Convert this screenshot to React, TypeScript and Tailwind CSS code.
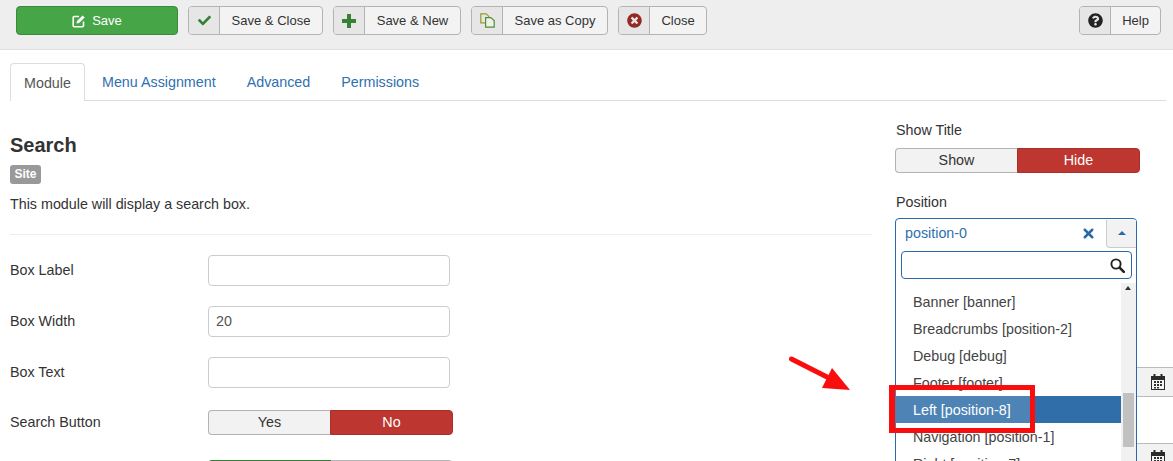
import { X } from 'lucide-react';
import { FaCheck, FaQuestionCircle, FaTimesCircle } from 'react-icons/fa';
import type { ReactNode } from 'react';

function ToolButton({ icon, label, width }: { icon: ReactNode; label: string; width: string }) {
  return (
    <div className={`flex h-[29px] ${width} rounded-[4px] border border-[#b3b3b3] bg-[#f3f3f3] text-[13px] text-[#333]`}>
      <div className="flex w-[31px] shrink-0 items-center justify-center rounded-l-[3px] border-r border-[#b3b3b3] bg-[#e6e6e6]">
        {icon}
      </div>
      <div className="flex flex-1 items-center justify-center">{label}</div>
    </div>
  );
}

function Toggle({ left, right, rightClass }: { left: string; right: string; rightClass: string }) {
  return (
    <div className="flex h-[25px] w-[245px] text-[14.3px]">
      <div className="flex w-[122px] items-center justify-center rounded-l-[4px] border border-r-0 border-[#b3b3b3] bg-[#f2f2f2] text-[#333]">
        {left}
      </div>
      <div className={`flex flex-1 items-center justify-center rounded-r-[4px] border ${rightClass}`}>{right}</div>
    </div>
  );
}

function Field({ label, value }: { label: string; value?: string }) {
  return (
    <div className="flex h-[31px] items-center">
      <div className="w-[198px] text-[14.3px] text-[#333]">{label}</div>
      <div className="flex h-[31px] w-[242px] items-center rounded-[4px] border border-[#ccc] bg-white px-[7px] text-[14.3px] text-[#555]">
        {value}
      </div>
    </div>
  );
}

function EditIcon() {
  return (
    <svg width="14" height="14" viewBox="0 0 14 14" fill="none">
      <path d="M7 2.5H2.2a1 1 0 0 0-1 1v8.3a1 1 0 0 0 1 1h8.3a1 1 0 0 0 1-1V7.5" stroke="#fff" strokeWidth="1.6" />
      <path d="M4.5 9.6l.5-2.6L10.6 1.4l2.1 2.1L7.1 9.1z" fill="#fff" />
    </svg>
  );
}

function PlusIcon() {
  return (
    <svg width="14" height="14" viewBox="0 0 14 14">
      <path d="M5 0h4v5h5v4H9v5H5V9H0V5h5z" fill="#378137" />
    </svg>
  );
}

function CopyIcon() {
  return (
    <svg width="15" height="15" viewBox="0 0 15 15" fill="none" stroke="#4b8f3a" strokeWidth="1.2">
      <path d="M.8.8h5.4l2.6 2.6v6.4H.8z" stroke="#9a9a2a" />
      <path d="M5.6 4.6h5.2l3.4 3v6.6H5.6z" fill="#f0f0e6" />
    </svg>
  );
}

function SearchIcon() {
  return (
    <svg width="15" height="15" viewBox="0 0 15 15" fill="none" stroke="#222">
      <circle cx="6" cy="6" r="4.6" strokeWidth="1.9" />
      <path d="M9.6 9.6l4.2 4.2" strokeWidth="2.6" strokeLinecap="round" />
    </svg>
  );
}

function CalendarIcon() {
  return (
    <svg width="14" height="16" viewBox="0 0 14 16">
      <path fill="#2b2b2b" d="M0 2h2.5V0h2v2h5V0h2v2H14v14H0z" />
      <path fill="#f4f4f4" d="M1 6h12v9H1z" />
      <path
        fill="#333"
        d="M3 7h2v2H3zM6 7h2v2H6zM9 7h2v2H9zM3 10h2v2H3zM6 10h2v2H6zM9 10h2v2H9zM3 13h2v1.6H3zM6 13h2v1.6H6z"
      />
    </svg>
  );
}

const positions = ['Banner [banner]', 'Breadcrumbs [position-2]', 'Debug [debug]', 'Footer [footer]', 'Left [position-8]', 'Navigation [position-1]', 'Right [position-7]'];

export default function App() {
  return (
    <div className="relative h-[461px] w-[1173px] overflow-hidden bg-white font-['Liberation_Sans',sans-serif]">
      {/* toolbar */}
      <div className="flex h-[50px] items-start gap-[10px] border-b border-[#e0e0e0] bg-[#eeeeee] pl-[16px] pr-[12px] pt-[6px]">
        <div className="flex h-[29px] w-[162px] items-center justify-center gap-[6px] rounded-[4px] border border-[#3a8a3c] bg-[#46a546] text-[13px] text-white">
          <EditIcon />
          Save
        </div>
        <ToolButton icon={<FaCheck size={13} className="text-[#378137]" />} label="Save & Close" width="w-[135px]" />
        <ToolButton icon={<PlusIcon />} label="Save & New" width="w-[128px]" />
        <ToolButton icon={<CopyIcon />} label="Save as Copy" width="w-[137px]" />
        <ToolButton icon={<FaTimesCircle size={15} className="text-[#942a25]" />} label="Close" width="w-[89px]" />
        <div className="ml-auto">
          <ToolButton icon={<FaQuestionCircle size={15} className="text-[#222]" />} label="Help" width="w-[82px]" />
        </div>
      </div>

      <div className="px-[10px] pt-[13px]">
        {/* tabs */}
        <div className="flex h-[38px] w-[1156px] items-start border-b border-[#ddd] text-[14.3px] text-[#2f70b0]">
          <div className="flex h-[38px] w-[75px] items-center justify-center rounded-t-[4px] border border-b-0 border-[#ddd] bg-white pt-[2px] text-[#555]">
            Module
          </div>
          <div className="flex h-[37px] items-center pl-[17px] pt-[2px]">Menu Assignment</div>
          <div className="flex h-[37px] items-center pl-[31px] pt-[2px]">Advanced</div>
          <div className="flex h-[37px] items-center pl-[31px] pt-[2px]">Permissions</div>
        </div>

        <div className="flex">
          {/* main column */}
          <div className="w-[862px] pt-[32px]">
            <h2 className="text-[20px] font-bold leading-[24px] text-[#333]">Search</h2>
            <span className="mt-[8px] block h-[19px] w-[31px] rounded-[3px] bg-[#999] text-center text-[12px] font-bold leading-[18px] text-white">
              Site
            </span>
            <p className="mt-[10px] text-[14.3px] leading-[20px] text-[#333]">This module will display a search box.</p>
            <div className="mt-[20px] border-t border-[#eee]" />
            <div className="mt-[20px] flex flex-col gap-[20px]">
              <Field label="Box Label" />
              <Field label="Box Width" value="20" />
              <Field label="Box Text" />
              <div className="mt-[2px] flex h-[25px] items-center">
                <div className="w-[198px] text-[14.3px] text-[#333]">Search Button</div>
                <Toggle left="Yes" right="No" rightClass="border-[#a9302a] bg-[#bd362f] text-white" />
              </div>
              <div className="ml-[198px] mt-[5px] flex h-[25px] w-[245px]">
                <div className="w-[123px] rounded-tl-[4px] border-t-2 border-[#378137] bg-[#46a546]" />
                <div className="flex-1 rounded-tr-[4px] border border-[#b3b3b3] bg-[#f2f2f2]" />
              </div>
            </div>
          </div>

          {/* side column */}
          <div className="ml-[24px] w-[260px] pt-[19px]">
            <div className="text-[14.3px] leading-[20px] text-[#333]">Show Title</div>
            <div className="-ml-px mt-[8px]">
              <Toggle left="Show" right="Hide" rightClass="border-[#a9302a] bg-[#bd362f] text-white" />
            </div>
            <div className="mt-[19px] text-[14.3px] leading-[20px] text-[#333]">Position</div>
          </div>
        </div>
      </div>

      {/* calendar inputs peeking out behind the dropdown */}
      <div className="absolute left-[1137px] top-[367px] flex h-[30px] w-[36px] items-center justify-center border-y border-[#bbb] bg-[#f2f2f2] pl-[6px]">
        <CalendarIcon />
      </div>
      <div className="absolute left-[1137px] top-[443px] flex h-[30px] w-[36px] items-center justify-center border-y border-[#bbb] bg-[#f2f2f2] pl-[6px]">
        <CalendarIcon />
      </div>

      {/* open position dropdown */}
      <div className="absolute left-[895px] top-[218px] h-[260px] w-[242px] rounded-t-[4px] border border-[#2a69a8] bg-white text-[14.3px]">
        <div className="flex h-[29px] items-center">
          <span className="flex-1 pl-[9px] text-[#2f70b0]">position-0</span>
          <X size={15} strokeWidth={4} className="mr-[10px] text-[#2a69a8]" />
          <div className="flex h-[28px] w-[30px] items-center justify-center rounded-bl-[4px] border-b border-l border-[#ccc] bg-[#f2f2f2]">
            <div className="h-0 w-0 border-x-[4px] border-b-[4px] border-x-transparent border-b-[#2a69a8]" />
          </div>
        </div>
        <div className="ml-[5px] mr-[4px] mt-[3px] flex h-[28px] items-center justify-end rounded-[4px] border border-[#2a69a8] pr-[6px]">
          <SearchIcon />
        </div>
        <div className="relative mt-[4px] flex">
          <div className="w-[225px] pt-[5px] text-[#444]">
            {positions.map((p) => (
              <div
                key={p}
                className={`flex h-[27px] items-center pl-[17px] pt-[2px] ${p.startsWith('Left') ? 'bg-[#2f6ea8] text-white' : ''}`}
              >
                {p}
              </div>
            ))}
          </div>
          <div className="relative w-[15px] bg-[#f1f1f1]">
            <div className="absolute left-[4px] top-[3px] h-0 w-0 border-x-[3.5px] border-b-[4px] border-x-transparent border-b-[#333]" />
            <div className="absolute left-[2px] top-[110px] h-[54px] w-[11px] bg-[#c1c1c1]" />
          </div>
        </div>
      </div>

      {/* annotation: red box and arrow */}
      <div className="absolute left-[889px] top-[385px] h-[48px] w-[146px] border-[5px] border-l-[6px] border-[#f90d0d] bg-white/15" />
      <svg className="absolute left-[785px] top-[352px]" width="70" height="44" viewBox="0 0 70 44">
        <path d="M6.5 7 L44 26" stroke="#f90d0d" strokeWidth="5" strokeLinecap="round" />
        <path d="M65 38 L37 36 L47 16 Z" fill="#f90d0d" />
      </svg>
    </div>
  );
}
